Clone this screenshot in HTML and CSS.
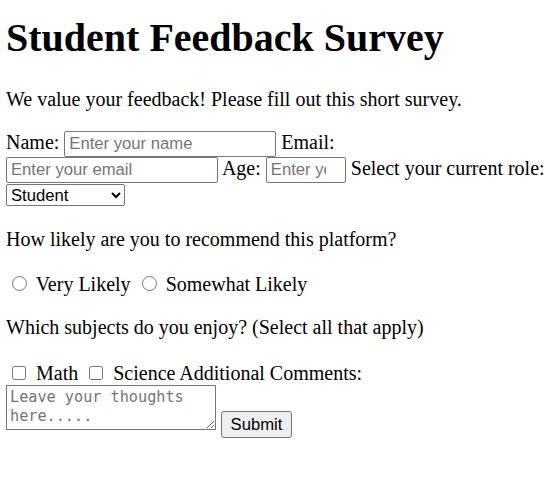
FILE: index.html
```html
<!DOCTYPE html>
<html lang="en">
<head>
<meta charset="utf-8">
<title>Student Feedback Survey</title>
<link rel="stylesheet" href="styles.css">
</head>
<body>
<h1 class="title">Student Feedback Survey</h1>
<p class="intro">We value your feedback! Please fill out this short survey.</p>
<form class="survey">
<label for="name">Name:</label> <input class="field field-wide" type="text" id="name" placeholder="Enter your name"> <label for="email">Email:</label> <input class="field field-wide" type="email" id="email" placeholder="Enter your email"> <label for="age">Age:</label> <input class="field field-age" type="number" id="age" placeholder="Enter your age"> <label for="role">Select your current role:</label> <select class="picker" id="role"><option>Student</option><option>Teacher</option><option>Other</option></select>
<p class="question">How likely are you to recommend this platform?</p>
<input class="choice radio" type="radio" id="vl" name="rec"> <label for="vl">Very Likely</label> <input class="choice radio" type="radio" id="sl" name="rec"> <label for="sl">Somewhat Likely</label>
<p class="question">Which subjects do you enjoy? (Select all that apply)</p>
<input class="choice check" type="checkbox" id="math"> <label for="math">Math</label> <input class="choice check" type="checkbox" id="sci"> <label for="sci">Science</label>
<label for="comments">Additional Comments:</label> <textarea class="comments" id="comments" placeholder="Leave your thoughts here....."></textarea> <button class="submit" type="submit">Submit</button>
</form>
</body>
</html>
```

FILE: styles.css
```css
html {
  background: #fff;
}
body {
  font-family: "Liberation Serif", "Times New Roman", serif;
  font-size: 20px;
  margin: 0 6px;
  color: #000;
}
.title {
  font-size: 40px;
  font-weight: bold;
  margin: 13.5px 0 27px;
}
.intro, .question {
  margin: 20px 0;
}
.field, .picker, .submit {
  font-family: "Liberation Sans", Arial, sans-serif;
  font-size: 16.67px;
  box-sizing: border-box;
}
.field {
  height: 26px;
  margin: 0;
  padding: 1px 4px;
  border: 1px solid #767676;
  border-radius: 2px;
  color: #000;
}
.field::placeholder {
  color: #757575;
}
.field-wide { width: 212px; }
.field-age { width: 80px; }
.picker {
  width: 119px;
  height: 22px;
  margin: 0 0 2px;
}
.choice {
  margin: 5px 4px 0 6px;
}
.radio {
  width: 15px;
  height: 15px;
}
.check {
  width: 14px;
  height: 14px;
  margin-top: 7px;
  margin-right: 5px;
}
.comments {
  box-sizing: border-box;
  width: 210px;
  height: 45px;
  margin: 0;
  padding: 2px 3px;
  font-family: "DejaVu Sans Mono", monospace;
  font-size: 15.2px;
  line-height: 19.5px;
  border: 1px solid #767676;
  vertical-align: baseline;
}
.comments::placeholder {
  color: #757575;
}
.submit {
  width: 71px;
  height: 27px;
  margin: 0;
  padding: 1px 7px;
  background: #efefef;
  border: 1px solid #767676;
  border-radius: 3px;
  color: #000;
}
```
